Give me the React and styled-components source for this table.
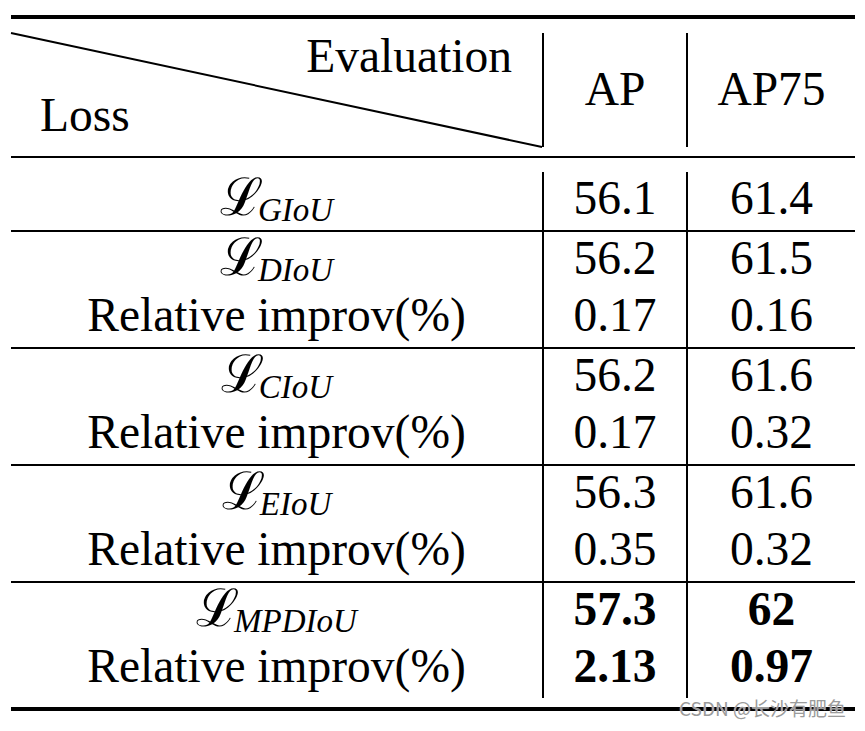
import styled, { createGlobalStyle } from 'styled-components'

const GlobalStyle = createGlobalStyle`
    html, body {
        margin: 0;
        padding: 0;
        background: #fff;
    }
`

const SERIF = '"Liberation Serif", "Times New Roman", serif'
const COLS = '533px 144px 167px'

const Page = styled.div`
    width: 865px;
    height: 731px;
    padding-top: 15px;
    box-sizing: border-box;
`

const Table = styled.div`
    position: relative;
    margin-left: 11px;
    width: 844px;
    font-family: ${SERIF};
    font-size: 47.5px;
    color: #000;
`

const Rule = styled.div`
    height: ${p => p.$thick}px;
    background: #000;
`

const Header = styled.div`
    display: grid;
    grid-template-columns: ${COLS};
    padding: 14px 0 9px;
`

const HeadCell = styled.div`
    position: relative;
    height: 114px;
    box-sizing: border-box;
    border-right: ${p => (p.$line ? '2px solid #000' : 'none')};
    display: flex;
    align-items: center;
    justify-content: center;
    line-height: 1;
`

const CornerCell = styled(HeadCell)`
    flex-direction: column;
    align-items: stretch;
    justify-content: space-between;
    padding: 0 30px 8px 29px;
`

const Diagonal = styled.svg`
    position: absolute;
    inset: 0;
    width: 100%;
    height: 100%;
    overflow: visible;
`

const CornerText = styled.span`
    align-self: ${p => (p.$end ? 'flex-end' : 'flex-start')};
    position: relative;
`

const Body = styled.div`
    padding: 14px 0 9px;
`

const Section = styled.div`
    display: grid;
    grid-template-columns: ${COLS};
`

const Cell = styled.div`
    box-sizing: border-box;
    border-right: ${p => (p.$line ? '2px solid #000' : 'none')};
    display: flex;
    flex-direction: column;
    align-items: center;
    font-weight: ${p => (p.$bold ? 700 : 400)};
`

const Line = styled.div`
    height: 57.5px;
    line-height: 52px;
    white-space: nowrap;
`

const Script = styled.span`
    font-family: ${SERIF};
    font-size: 52px;
`

const Sub = styled.sub`
    font-family: ${SERIF};
    font-style: italic;
    font-size: 33px;
    vertical-align: -6px;
    line-height: 0;
    margin-left: -5px;
`

const Watermark = styled.span`
    position: absolute;
    right: 9px;
    bottom: -10px;
    font-family: "Noto Sans CJK SC", "Noto Sans", sans-serif;
    font-size: 19px;
    color: #9b9b9b;
    text-shadow: 0 0 1px #fff;
    white-space: nowrap;
`

const sections = [
    { loss: 'GIoU', ap: '56.1', ap75: '61.4' },
    { loss: 'DIoU', ap: '56.2', ap75: '61.5', rel: ['0.17', '0.16'] },
    { loss: 'CIoU', ap: '56.2', ap75: '61.6', rel: ['0.17', '0.32'] },
    { loss: 'EIoU', ap: '56.3', ap75: '61.6', rel: ['0.35', '0.32'] },
    { loss: 'MPDIoU', ap: '57.3', ap75: '62', rel: ['2.13', '0.97'], bold: true },
]

export default function App() {
    return (
        <>
            <GlobalStyle />
            <Page>
                <Table>
                    <Rule $thick={4} />
                    <Header>
                        <CornerCell $line>
                            <Diagonal preserveAspectRatio="none">
                                <line x1="0" y1="0" x2="100%" y2="100%" stroke="#000" strokeWidth="2" />
                            </Diagonal>
                            <CornerText $end>Evaluation</CornerText>
                            <CornerText>Loss</CornerText>
                        </CornerCell>
                        <HeadCell $line>AP</HeadCell>
                        <HeadCell>AP75</HeadCell>
                    </Header>
                    <Rule $thick={2} />
                    <Body>
                        {sections.map((s, i) => (
                            <div key={s.loss}>
                                {i > 0 && <Rule $thick={2} />}
                                <Section>
                                    <Cell $line>
                                        <Line>
                                            <Script>ℒ</Script>
                                            <Sub>{s.loss}</Sub>
                                        </Line>
                                        {s.rel && <Line>Relative improv(%)</Line>}
                                    </Cell>
                                    <Cell $line $bold={s.bold}>
                                        <Line>{s.ap}</Line>
                                        {s.rel && <Line>{s.rel[0]}</Line>}
                                    </Cell>
                                    <Cell $bold={s.bold}>
                                        <Line>{s.ap75}</Line>
                                        {s.rel && <Line>{s.rel[1]}</Line>}
                                    </Cell>
                                </Section>
                            </div>
                        ))}
                    </Body>
                    <Rule $thick={4} />
                    <Watermark>CSDN @长沙有肥鱼</Watermark>
                </Table>
            </Page>
        </>
    )
}
